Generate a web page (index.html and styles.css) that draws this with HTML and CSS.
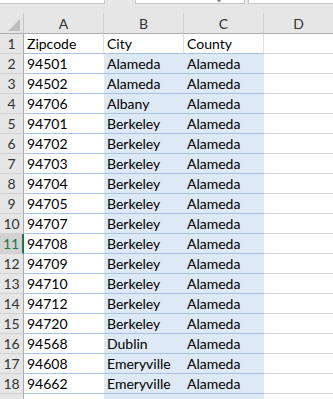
FILE: index.html
```html
<!DOCTYPE html>
<html>
<head>
<meta charset="utf-8">
<link rel="stylesheet" href="styles.css">
</head>
<body>
<div class="topbar">
  <div class="box box1"></div>
  <div class="box box2"><span class="knob"></span></div>
  <div class="box box3"></div>
</div>
<div class="sheet">
  <div class="corner"><svg width="24" height="20" viewBox="0 0 24 20"><polygon points="8,18 20,18 20,6" fill="#bdbdbd"/></svg></div>
  <div class="colh">A</div><div class="colh">B</div><div class="colh">C</div><div class="colh last">D</div>

  <div class="rowh">1</div><div class="c a h1">Zipcode</div><div class="c b h1">City</div><div class="c cc h1">County</div><div class="c d"></div>
  <div class="rowh">2</div><div class="c a">94501</div><div class="c b sel">Alameda</div><div class="c cc sel">Alameda</div><div class="c d"></div>
  <div class="rowh">3</div><div class="c a">94502</div><div class="c b sel">Alameda</div><div class="c cc sel">Alameda</div><div class="c d"></div>
  <div class="rowh">4</div><div class="c a">94706</div><div class="c b sel">Albany</div><div class="c cc sel">Alameda</div><div class="c d"></div>
  <div class="rowh">5</div><div class="c a">94701</div><div class="c b sel">Berkeley</div><div class="c cc sel">Alameda</div><div class="c d"></div>
  <div class="rowh">6</div><div class="c a">94702</div><div class="c b sel">Berkeley</div><div class="c cc sel">Alameda</div><div class="c d"></div>
  <div class="rowh">7</div><div class="c a">94703</div><div class="c b sel">Berkeley</div><div class="c cc sel">Alameda</div><div class="c d"></div>
  <div class="rowh">8</div><div class="c a">94704</div><div class="c b sel">Berkeley</div><div class="c cc sel">Alameda</div><div class="c d"></div>
  <div class="rowh">9</div><div class="c a">94705</div><div class="c b sel">Berkeley</div><div class="c cc sel">Alameda</div><div class="c d"></div>
  <div class="rowh">10</div><div class="c a">94707</div><div class="c b sel">Berkeley</div><div class="c cc sel">Alameda</div><div class="c d"></div>
  <div class="rowh active">11</div><div class="c a">94708</div><div class="c b sel">Berkeley</div><div class="c cc sel">Alameda</div><div class="c d"></div>
  <div class="rowh">12</div><div class="c a">94709</div><div class="c b sel">Berkeley</div><div class="c cc sel">Alameda</div><div class="c d"></div>
  <div class="rowh">13</div><div class="c a">94710</div><div class="c b sel">Berkeley</div><div class="c cc sel">Alameda</div><div class="c d"></div>
  <div class="rowh">14</div><div class="c a">94712</div><div class="c b sel">Berkeley</div><div class="c cc sel">Alameda</div><div class="c d"></div>
  <div class="rowh">15</div><div class="c a">94720</div><div class="c b sel">Berkeley</div><div class="c cc sel">Alameda</div><div class="c d"></div>
  <div class="rowh">16</div><div class="c a">94568</div><div class="c b sel">Dublin</div><div class="c cc sel">Alameda</div><div class="c d"></div>
  <div class="rowh">17</div><div class="c a">94608</div><div class="c b sel">Emeryville</div><div class="c cc sel">Alameda</div><div class="c d"></div>
  <div class="rowh">18</div><div class="c a">94662</div><div class="c b sel">Emeryville</div><div class="c cc sel">Alameda</div><div class="c d"></div>
  <div class="rowh"></div><div class="c a"></div><div class="c b sel"></div><div class="c cc sel"></div><div class="c d"></div>
</div>
</body>
</html>
```
FILE: styles.css
```css
html, body {
  margin: 0;
  padding: 0;
  width: 333px;
  height: 399px;
  overflow: hidden;
  background: #e6e6e6;
  font-family: "Lato", "Liberation Sans", sans-serif;
}
.topbar {
  height: 13px;
  position: relative;
  display: flex;
  align-items: flex-start;
}
.box {
  height: 3px;
  background: #fff;
  border: 1px solid #c6c6c6;
  border-top: none;
  box-sizing: content-box;
  position: relative;
}
.box1 { margin-left: -1px; width: 104px; }
.box2 { margin-left: 30px; width: 108px; }
.box3 { margin-left: 3px; flex: 1; border-right: none; }
.knob {
  position: absolute;
  left: 81px;
  top: 0;
  width: 4px;
  height: 2px;
  background: #8a8a8a;
  border-radius: 0 0 2px 2px;
}
.sheet {
  display: grid;
  grid-template-columns: 24px 80px 80px 80px 1fr;
  grid-template-rows: 21px repeat(19, 20px);
  background: #fff;
}
.corner {
  background: #e6e6e6;
  border-right: 1px solid #c6c6c6;
  border-bottom: 1px solid #ababab;
  box-sizing: border-box;
  overflow: hidden;
}
.corner svg { display: block; }
.colh {
  background: #e6e6e6;
  border-right: 1px solid #cfcfcf;
  border-bottom: 1px solid #ababab;
  box-sizing: border-box;
  display: flex;
  align-items: center;
  justify-content: center;
  font-size: 14px;
  color: #333;
  padding-top: 1px;
}
.colh.last { border-right: none; }
.rowh {
  background: #e6e6e6;
  border-right: 1px solid #ababab;
  border-bottom: 1px solid #d0d0d0;
  box-sizing: border-box;
  display: flex;
  align-items: center;
  justify-content: center;
  font-size: 14px;
  color: #333;
}
.rowh.active {
  background: #d2d2d2;
  color: #217346;
  border-right: 2px solid #217346;
}
.c {
  box-sizing: border-box;
  border-bottom: 1px solid #a9c1e2;
  display: flex;
  align-items: center;
  padding-left: 3px;
  font-size: 14px;
  color: #000;
  white-space: nowrap;
  overflow: hidden;
}
.c.d { border-bottom: 1px solid #d4d4d4; }
.c.h1 { border-right: 1px solid #e0e0e0; }
.sel { background: #dde9f5; }
```
